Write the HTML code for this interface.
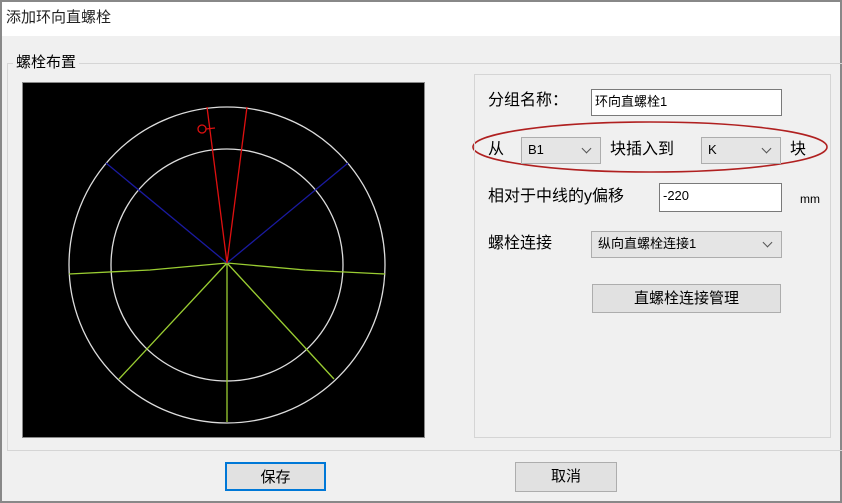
<!DOCTYPE html>
<html><head><meta charset="utf-8"><style>
*{margin:0;padding:0;box-sizing:border-box}
body{width:842px;height:503px;background:#f0f0f0;position:relative;overflow:hidden;font-family:"Liberation Sans","Noto Sans CJK SC",sans-serif;color:#000}
.a{position:absolute}
.t{font-size:16px;line-height:20px;white-space:nowrap}
.inp{background:#fff;border:1px solid #7a7a7a;font-size:13px;line-height:24px;padding-left:3px}
.cb{background:#e5e5e5;border:1px solid #adadad;font-size:13px;padding-left:6px;line-height:24px}
.cb:after{content:"";position:absolute;right:10px;top:7px;width:6px;height:6px;border-right:1px solid #555;border-bottom:1px solid #555;transform:rotate(45deg)}
.btn{background:#e1e1e1;border:1px solid #adadad;text-align:center;font-size:15px;line-height:27px}
</style></head><body>
<div class="a" style="left:0;top:0;width:842px;height:503px;border:2px solid #888;border-bottom-width:2px"></div>
<div class="a" style="left:2px;top:2px;width:838px;height:34px;background:#fff"></div>
<div class="a t" style="left:6px;top:8px;font-size:15px;color:#222">添加环向直螺栓</div>
<div class="a" style="left:7px;top:63px;width:840px;height:388px;border:1px solid #d5d5d5"></div>
<div class="a t" style="left:13px;top:53px;background:#f0f0f0;padding:0 3px;font-size:15px">螺栓布置</div>
<div class="a" style="left:22px;top:82px;width:403px;height:356px;background:#000;border:1px solid #888"></div>
<svg class="a" style="left:0;top:0" width="842" height="503">
<g fill="none" stroke-width="1.3">
<circle cx="227" cy="265" r="158" stroke="#ddd"/>
<circle cx="227" cy="265" r="116" stroke="#ddd"/>
<polyline points="69,274 150,270 227,263 305,270 385,274" stroke="#9acd32"/>
<line x1="227" y1="263" x2="119" y2="379" stroke="#9acd32"/>
<line x1="227" y1="263" x2="334" y2="379" stroke="#9acd32"/>
<line x1="227" y1="263" x2="227" y2="422" stroke="#9acd32"/>
<line x1="227" y1="263" x2="106" y2="163" stroke="#1a1aa0"/>
<line x1="227" y1="263" x2="348" y2="163" stroke="#1a1aa0"/>
<line x1="227" y1="263" x2="207" y2="107" stroke="#e01010"/>
<line x1="227" y1="263" x2="247" y2="107" stroke="#e01010"/>
<circle cx="202" cy="129" r="4" stroke="#e01010"/>
<line x1="206" y1="129" x2="215" y2="128" stroke="#e01010"/>
<ellipse cx="650" cy="147" rx="177" ry="25" stroke="#b02020" stroke-width="1.6"/>
</g></svg>
<div class="a" style="left:474px;top:74px;width:357px;height:364px;border:1px solid #d5d5d5"></div>
<div class="a t" style="left:488px;top:91px">分组名称：</div>
<div class="a inp" style="left:591px;top:89px;width:191px;height:27px">环向直螺栓1</div>
<div class="a t" style="left:488px;top:140px">从</div>
<div class="a cb" style="left:521px;top:137px;width:80px;height:27px">B1</div>
<div class="a t" style="left:610px;top:140px">块插入到</div>
<div class="a cb" style="left:701px;top:137px;width:80px;height:27px">K</div>
<div class="a t" style="left:790px;top:140px">块</div>
<div class="a t" style="left:488px;top:187px">相对于中线的y偏移</div>
<div class="a inp" style="left:659px;top:183px;width:123px;height:29px">-220</div>
<div class="a t" style="left:800px;top:189px;font-size:12px">mm</div>
<div class="a t" style="left:488px;top:234px">螺栓连接</div>
<div class="a cb" style="left:591px;top:231px;width:191px;height:27px">纵向直螺栓连接1</div>
<div class="a btn" style="left:592px;top:284px;width:189px;height:29px">直螺栓连接管理</div>
<div class="a btn" style="left:225px;top:462px;width:101px;height:29px;border:2px solid #0078d7">保存</div>
<div class="a btn" style="left:515px;top:462px;width:102px;height:30px">取消</div>
</body></html>
